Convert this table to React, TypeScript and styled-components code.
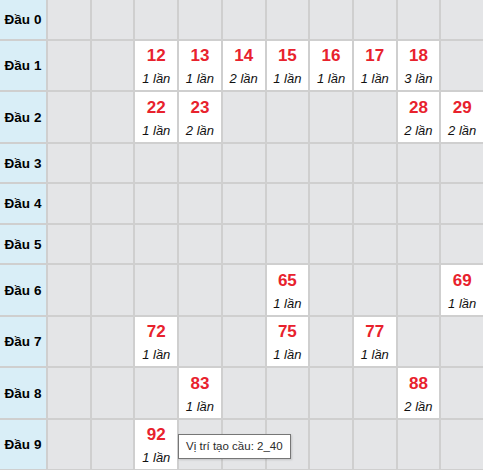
import React from "react";
import styled, { createGlobalStyle } from "styled-components";

const hits: Record<string, number> = {
  "12": 1, "13": 1, "14": 2, "15": 1, "16": 1, "17": 1, "18": 3,
  "22": 1, "23": 2, "28": 2, "29": 2,
  "65": 1, "69": 1,
  "72": 1, "75": 1, "77": 1,
  "83": 1, "88": 2,
  "92": 1,
};

const heads = [0, 1, 2, 3, 4, 5, 6, 7, 8, 9];

const App = () => {
  return (
    <Page>
      <GlobalStyle />
      <Board>
        {heads.map((h) => {
          const filled = heads.some((t) => hits[`${h}${t}`]);
          return (
            <Row key={h} tall={filled}>
              <Head>Đầu {h}</Head>
              {heads.map((t) => {
                const num = `${h}${t}`;
                const count = hits[num];
                return count ? (
                  <Cell key={t} active>
                    <Num>{num}</Num>
                    <Count>{count} lần</Count>
                    {num === "92" && <Tip>Vị trí tạo cầu: 2_40</Tip>}
                  </Cell>
                ) : (
                  <Cell key={t} />
                );
              })}
            </Row>
          );
        })}
      </Board>
    </Page>
  );
};

export default App;

const GlobalStyle = createGlobalStyle`
  html, body {
    margin: 0;
    padding: 0;
    background: #ffffff;
    overflow: hidden;
  }
`;

const Page = styled.div`
  width: 483px;
  height: 470px;
  overflow: hidden;
  font-family: "Liberation Sans", Arial, sans-serif;
`;

const Board = styled.div`
  display: flex;
  flex-direction: column;
  gap: 2px;
  background: #cfcfcf;
  padding-bottom: 2px;
`;

const Row = styled.div<{ tall?: boolean }>`
  display: grid;
  grid-template-columns: 46px repeat(10, 1fr);
  gap: 2px;
  height: ${({ tall }) => (tall ? "49.5px" : "38.5px")};
`;

const Head = styled.div`
  background: #d9eef7;
  display: flex;
  align-items: center;
  justify-content: center;
  padding-top: 1px;
  font-size: 13.5px;
  font-weight: 700;
  color: #000;
  white-space: nowrap;
`;

const Cell = styled.div<{ active?: boolean }>`
  position: relative;
  box-sizing: border-box;
  padding-top: 3px;
  background: ${({ active }) => (active ? "#ffffff" : "#e4e5e7")};
  display: flex;
  flex-direction: column;
  align-items: center;
  justify-content: center;
  gap: 5px;
`;

const Num = styled.div`
  color: #e8222d;
  font-size: 17px;
  font-weight: 700;
  line-height: 20px;
`;

const Count = styled.div`
  font-size: 13px;
  font-style: italic;
  line-height: 16px;
  color: #111;
  white-space: nowrap;
`;

const Tip = styled.div`
  position: absolute;
  left: calc(100% + 1px);
  top: 14px;
  z-index: 2;
  background: #ffffff;
  border: 1px solid #767676;
  box-shadow: 1px 1px 2px rgba(0, 0, 0, 0.15);
  padding: 4px 7px;
  font-size: 11.5px;
  line-height: 15px;
  color: #2b2b2b;
  white-space: nowrap;
`;
